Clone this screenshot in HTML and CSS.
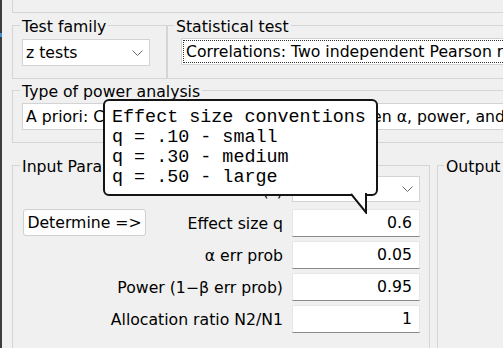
FILE: index.html
```html
<!DOCTYPE html>
<html lang="en">
<head>
  <meta charset="UTF-8">
  <title>G*Power - z tests</title>
  <link rel="stylesheet" href="styles.css">
</head>
<body>
  <div class="screen">
    <div class="strip"></div>
    <div class="main">
      <div class="top-group"></div>

      <div class="row">
        <fieldset class="group family">
          <legend>Test family</legend>
          <div class="combo small">
            <span>z tests</span>
            <svg class="chevron" width="11" height="6" viewBox="0 0 11 6"><polyline points="0.5,0.5 5.5,5.5 10.5,0.5"/></svg>
          </div>
        </fieldset>
        <fieldset class="group stat">
          <legend>Statistical test</legend>
          <div class="combo focus">
            <span class="focus-ring">Correlations: Two independent Pearson r's</span>
          </div>
        </fieldset>
      </div>

      <fieldset class="group type">
        <legend>Type of power analysis</legend>
        <div class="combo">
          <span>A priori: Compute required sample size - given α, power, and effect size</span>
        </div>
      </fieldset>

      <div class="row params">
        <fieldset class="group input">
          <legend>Input Parameters</legend>
          <div class="param-grid">
            <span class="label wide">Tail(s)</span>
            <div class="combo small short">
              <span>Two</span>
              <svg class="chevron" width="11" height="6" viewBox="0 0 11 6"><polyline points="0.5,0.5 5.5,5.5 10.5,0.5"/></svg>
            </div>

            <button class="determine">Determine =&gt;</button>
            <span class="label">Effect size q</span>
            <div class="field">0.6</div>

            <span class="label wide">α err prob</span>
            <div class="field">0.05</div>

            <span class="label wide">Power (1−β err prob)</span>
            <div class="field">0.95</div>

            <span class="label wide">Allocation ratio N2/N1</span>
            <div class="field">1</div>
          </div>
        </fieldset>
        <fieldset class="group output">
          <legend>Output Parameters</legend>
        </fieldset>
      </div>
    </div>

    <div class="tooltip">
      <div>Effect size conventions</div>
      <div>q = .10 - small</div>
      <div>q = .30 - medium</div>
      <div>q = .50 - large</div>
      <svg class="tail" width="17" height="21" viewBox="0 0 17 21">
        <polygon points="0,0 15,19 15,0" fill="#fff"/>
        <polyline points="0,1 15,19.5 15,0" fill="none" stroke="#141414" stroke-width="2"/>
      </svg>
    </div>
  </div>
</body>
</html>
```

FILE: styles.css
```css
body {
  margin: 0;
  padding: 0;
  font-family: "DejaVu Sans", sans-serif;
  font-size: 15.7px;
  color: #000;
  background: #f0f0f0;
}

.screen {
  position: relative;
  width: 503px;
  height: 348px;
  overflow: hidden;
  display: flex;
  background: #f0f0f0;
}

.strip {
  width: 2px;
  flex-shrink: 0;
  background: linear-gradient(#3c3c3c 33px, #3b8fd6 33px, #3b8fd6 37px, #3c3c3c 37px);
}

.main {
  flex-shrink: 0;
  width: 760px;
  padding-left: 10px;
}

.top-group {
  height: 12px;
  border-left: 1px solid #d5d5d5;
  border-bottom: 1px solid #d5d5d5;
}

.row {
  display: flex;
}

/* group boxes */
.group {
  margin: 0;
  border: 1px solid #d5d5d5;
  min-width: 0;
  box-sizing: border-box;
}

.group legend {
  padding: 3px 2px 0;
  line-height: 18px;
}

.family {
  margin-top: 2px;
  width: 155px;
  padding: 3px 16px 12px 9px;
}

.family legend {
  margin-left: -2px;
}

.stat {
  margin-top: 2px;
  flex: 1;
  padding: 2px 0 12px 13px;
}

.stat legend {
  margin-left: -7px;
}

.type {
  margin-top: 1px;
  padding: 2px 0 12px 9px;
}

.type legend {
  margin-left: -2px;
}

.params {
  margin-top: 12px;
}

.input {
  width: 418px;
  padding: 0 9px 40px 10px;
}

.input legend {
  margin-left: -3px;
}

.output {
  flex: 1;
  margin-left: 7px;
  padding: 0 10px 40px 10px;
}

.output legend {
  margin-left: -4px;
}

/* combo boxes */
.combo {
  height: 27px;
  box-sizing: border-box;
  background: #fff;
  border: 1px solid #d3d3d3;
  display: flex;
  align-items: center;
  justify-content: space-between;
  padding: 0 6px 0 3px;
  white-space: nowrap;
}

.combo.small {
  width: 128px;
}

.combo.short {
  height: 26px;
}

.combo.focus {
  padding: 1px;
}

.focus-ring {
  flex: 1;
  height: 100%;
  box-sizing: border-box;
  border: 1px dotted #333;
  padding-left: 2px;
  display: flex;
  align-items: center;
}

.chevron polyline {
  fill: none;
  stroke: #6b6b6b;
  stroke-width: 1;
}

/* parameter rows */
.param-grid {
  display: grid;
  grid-template-columns: 123px minmax(0, 1fr) 128px;
  grid-template-rows: 29px repeat(4, 28px);
  column-gap: 9px;
  row-gap: 4px;
}

.param-grid .combo {
  align-self: start;
}

.label {
  grid-column: 2;
  text-align: right;
  align-self: center;
  white-space: nowrap;
}

.label.wide {
  grid-column: 1 / 3;
}

.determine {
  height: 27px;
  padding: 0;
  font: inherit;
  color: #000;
  background: #fdfdfd;
  border: 1px solid #d0d0d0;
  border-radius: 3px;
}

.field {
  background: #fff;
  border: 1px solid #e6e6e6;
  border-bottom: 1px solid #8a8a8a;
  box-sizing: border-box;
  text-align: right;
  padding-right: 7px;
  line-height: 26px;
}

/* effect size tooltip */
.tooltip {
  position: absolute;
  left: 103px;
  top: 99px;
  width: 275px;
  height: 97px;
  box-sizing: border-box;
  background: #fff;
  border: 2px solid #141414;
  border-radius: 6px;
  padding: 7px 0 0 7px;
  font-family: "Liberation Mono", monospace;
  font-size: 18.4px;
  line-height: 20px;
  white-space: nowrap;
}

.tail {
  position: absolute;
  left: 246px;
  top: 92px;
}
```
